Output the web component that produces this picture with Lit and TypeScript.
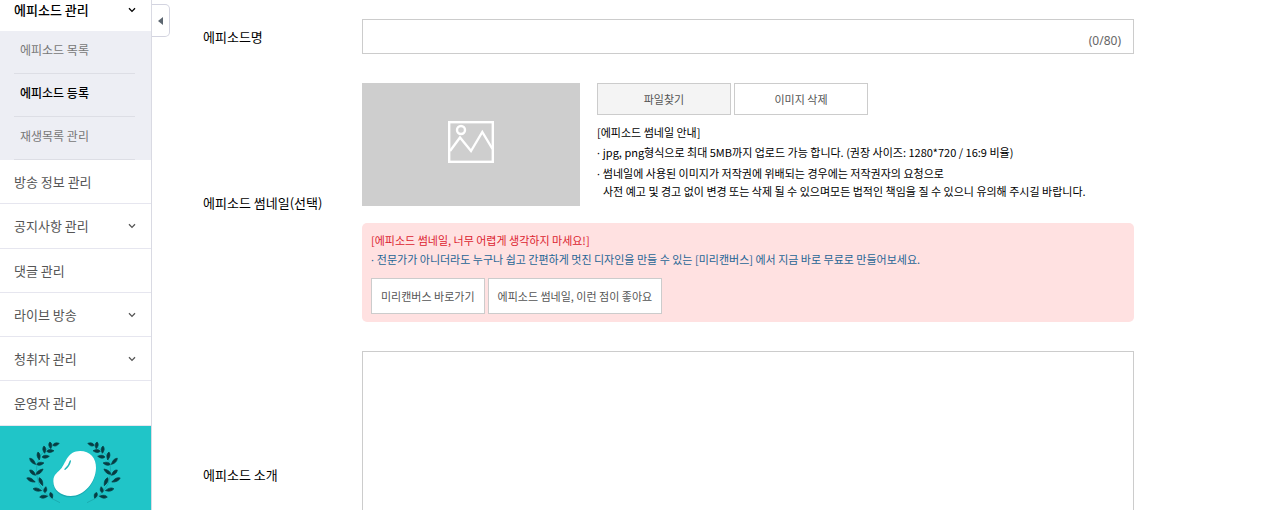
import { LitElement, html, css, svg, nothing } from "lit";
import { customElement, state } from "lit/decorators.js";
import { classMap } from "lit/directives/class-map.js";

interface MenuItem {
  label: string;
  group?: boolean;
}

const SUB_MENU = ["에피소드 목록", "에피소드 등록", "재생목록 관리"];

const MENU: MenuItem[] = [
  { label: "방송 정보 관리" },
  { label: "공지사항 관리", group: true },
  { label: "댓글 관리" },
  { label: "라이브 방송", group: true },
  { label: "청취자 관리", group: true },
  { label: "운영자 관리" },
];

// Leaves of the left laurel branch: centre x, centre y, rotation, half length.
const LEAVES = [
  [168, 73, -18, 10],
  [151, 76, 82, 10],
  [133, 89, 84, 11],
  [151, 93, -4, 11],
  [116, 108, 80, 12],
  [137, 110, -6, 11],
  [98, 124, 46, 13],
  [121, 131, -12, 11],
  [98, 158, 42, 12],
  [119, 155, -38, 13],
  [93, 180, 26, 14],
  [123, 185, 66, 13],
  [112, 209, 12, 13],
  [136, 209, -80, 9],
  [131, 230, -6, 12],
  [154, 226, 70, 9],
];

const chevron = html`<svg class="chevron" viewBox="0 0 8 6" aria-hidden="true">
  <path d="M1 1.2 4 4.4 7 1.2" fill="none" stroke="currentColor" stroke-width="1.3" />
</svg>`;

@customElement("side-menu")
export class SideMenu extends LitElement {
  static styles = css`
    :host {
      display: block;
      background: #fff;
      border-right: 1px solid #d9dae3;
      overflow: hidden;
    }
    ul {
      margin: 0;
      padding: 0;
      list-style: none;
    }
    a {
      color: inherit;
      text-decoration: none;
    }
    .item {
      display: flex;
      align-items: center;
      justify-content: space-between;
      box-sizing: border-box;
      height: 44px;
      padding: 0 15px 0 14px;
      border-bottom: 1px solid #e6e6ef;
      color: #555;
      font-size: 13px;
      line-height: 20px;
    }
    li:nth-child(4n + 2) .item {
      height: 45px;
    }
    .item.open {
      height: auto;
      padding-bottom: 11px;
      border-bottom: 0;
      color: #000;
      font-weight: 500;
    }
    .chevron {
      width: 8px;
      height: 6px;
    }
    .sub {
      padding: 0 16px 0 14px;
      background: #edeef4;
      color: #777;
      font-size: 12px;
      line-height: 20px;
    }
    .sub a {
      display: block;
      padding: 9px 6px 13px;
      border-bottom: 1px solid #dddee5;
    }
    .sub .current {
      color: #000;
      font-weight: 500;
    }
    .banner {
      display: block;
      background: #20c5c8;
    }
    .banner svg {
      display: block;
      width: 100%;
    }
  `;

  private branch() {
    return svg`
      <path d="M168 73Q104 96 109 160Q116 224 180 248" fill="none" stroke="#158f95" stroke-width="3" opacity=".45" />
      ${LEAVES.map(
        ([x, y, r, l]) => svg`<path fill="#073c42"
          d="M${-l} 0Q${-l / 3} -9 ${l} 0Q${-l / 5} 9 ${-l} 0Z"
          stroke="#073c42" stroke-width="2" stroke-linejoin="round"
          transform="translate(${x} ${y}) rotate(${r})" />`,
      )}`;
  }

  render() {
    return html`
      <nav aria-label="관리 메뉴">
        <a class="item open" href="#">에피소드 관리 ${chevron}</a>
        <ul class="sub">
          ${SUB_MENU.map(
            (label, i) =>
              html`<li><a href="#" class=${classMap({ current: i === 1 })}>${label}</a></li>`,
          )}
        </ul>
        <ul>
          ${MENU.map(
            (m) => html`<li>
              <a href="#" class="item">${m.label} ${m.group ? chevron : nothing}</a>
            </li>`,
          )}
        </ul>
      </nav>
      <a class="banner" href="#" aria-label="배너">
        <svg viewBox="0 18 453 270" aria-hidden="true">
          <g>${this.branch()}</g>
          <g transform="translate(441 0) scale(-1 1)">${this.branch()}</g>
          <path
            d="M240 97C270 97 289 118 288 148C287 192 252 232 212 232C182 232 160 214 160 188C160 166 174 162 185 148C198 130 204 97 240 97Z"
            fill="#149aa3"
            opacity=".6"
          />
          <path
            d="M240 93C270 93 289 114 288 144C287 188 252 228 212 228C182 228 160 210 160 184C160 162 174 158 185 144C198 126 204 93 240 93Z"
            fill="#fff"
          />
          <path
            d="M211 123Q208 137 195 148"
            fill="none"
            stroke="#20b5b8"
            stroke-width="4"
            stroke-linecap="round"
          />
        </svg>
      </a>
    `;
  }
}

@customElement("episode-form")
export class EpisodeForm extends LitElement {
  static styles = css`
    :host {
      display: block;
    }
    form {
      display: grid;
      grid-template-columns: 159px minmax(0, 1fr);
      align-items: center;
      row-gap: 29px;
      color: #000;
    }
    .label {
      font-size: 13px;
      line-height: 20px;
    }
    .field {
      display: flex;
      align-items: flex-end;
      border: 1px solid #ccc;
      background: #fff;
    }
    .field input {
      flex: 1;
      min-width: 0;
      height: 33px;
      box-sizing: border-box;
      padding: 0 10px;
      border: 0;
      outline: 0;
      background: none;
      font: inherit;
      font-size: 13px;
    }
    .count {
      padding: 0 12px 2px;
      color: #666;
      font: 12px/20px "Noto Sans", "Open Sans", sans-serif;
    }
    .thumb {
      display: flex;
      gap: 17px;
      margin-bottom: 17px;
    }
    .preview {
      display: flex;
      flex: none;
      align-items: center;
      justify-content: center;
      box-sizing: border-box;
      width: 218px;
      height: 123px;
      padding-bottom: 5px;
      background: #cecece;
    }
    .preview svg {
      width: 46px;
      height: 42px;
    }
    .buttons {
      display: flex;
      gap: 3px;
    }
    button {
      box-sizing: border-box;
      height: 36px;
      padding: 0 9px;
      border: 1px solid #ccc;
      background: #fff;
      color: #555;
      font: inherit;
      font-size: 11px;
      line-height: 20px;
      white-space: nowrap;
    }
    .file button {
      width: 134px;
      height: 32px;
    }
    .file .find {
      background: #f4f4f4;
    }
    .notes {
      padding-top: 7px;
      font-size: 11px;
      line-height: 20px;
    }
    p {
      margin: 0;
    }
    .dot {
      font-family: "Noto Sans", sans-serif;
      line-height: 1;
    }
    .notes .pair {
      padding-top: 2px;
      line-height: 18px;
    }
    .indent {
      display: block;
      padding-left: 6px;
    }
    .tip {
      padding: 8px 9px;
      border-radius: 5px;
      background: #ffe1e1;
      font-size: 11px;
      line-height: 19px;
    }
    .tip .buttons {
      margin-top: 9px;
    }
    .red {
      color: #dc2430;
    }
    .blue {
      color: #1f6595;
    }
    textarea {
      display: block;
      box-sizing: border-box;
      width: 100%;
      height: 248px;
      padding: 10px;
      border: 1px solid #ccc;
      outline: 0;
      resize: none;
      font: inherit;
      font-size: 13px;
    }
  `;

  @state() private title = "";

  render() {
    const dot = html`<span class="dot">· </span>`;
    return html`
      <form @submit=${(e: Event) => e.preventDefault()}>
        <label class="label" for="title">에피소드명</label>
        <div class="field">
          <input
            id="title"
            type="text"
            maxlength="80"
            .value=${this.title}
            @input=${(e: Event) => (this.title = (e.target as HTMLInputElement).value)}
          />
          <span class="count">(${this.title.length}/80)</span>
        </div>

        <span class="label" id="thumb-label">에피소드 썸네일(선택)</span>
        <div role="group" aria-labelledby="thumb-label">
          <div class="thumb">
            <div class="preview">
              <svg viewBox="0 0 46 42" fill="none" stroke="#fff" stroke-width="2.4" aria-hidden="true">
                <rect x="1.200" y="1.200" width="43.600" height="39.600" />
                <circle cx="13" cy="9" r="4" />
                <path d="M2 30 12 16.500 23 30 34.300 11 44.500 28" />
              </svg>
            </div>
            <div class="file">
              <div class="buttons">
                <button type="button" class="find">파일찾기</button>
                <button type="button">이미지 삭제</button>
              </div>
              <div class="notes">
                <p>[에피소드 썸네일 안내]</p>
                <p>${dot}jpg, png형식으로 최대 5MB까지 업로드 가능 합니다. (권장 사이즈: 1280*720 / 16:9 비율)</p>
                <p class="pair">
                  ${dot}썸네일에 사용된 이미지가 저작권에 위배되는 경우에는 저작권자의 요청으로
                  <span class="indent"
                    >사전 예고 및 경고 없이 변경 또는 삭제 될 수 있으며모든 법적인 책임을 질 수 있으니 유의해 주시길 바랍니다.</span
                  >
                </p>
              </div>
            </div>
          </div>
          <div class="tip">
            <p class="red">[에피소드 썸네일, 너무 어렵게 생각하지 마세요!]</p>
            <p class="blue">${dot}전문가가 아니더라도 누구나 쉽고 간편하게 멋진 디자인을 만들 수 있는 [미리캔버스] 에서 지금 바로 무료로 만들어보세요.</p>
            <div class="buttons">
              <button type="button">미리캔버스 바로가기</button>
              <button type="button">에피소드 썸네일, 이런 점이 좋아요</button>
            </div>
          </div>
        </div>

        <label class="label" for="intro">에피소드 소개</label>
        <textarea id="intro"></textarea>
      </form>
    `;
  }
}

@customElement("app-root")
export class AppRoot extends LitElement {
  static styles = css`
    :host {
      display: flex;
      align-items: stretch;
      height: 100vh;
      overflow: hidden;
      background: #fff;
      font-family: "Noto Sans CJK KR", "Noto Sans", sans-serif;
    }
    side-menu {
      flex: none;
      width: 151px;
    }
    .fold {
      display: flex;
      flex: none;
      align-items: center;
      justify-content: center;
      box-sizing: border-box;
      width: 18px;
      height: 33px;
      margin: 4px 0 0;
      padding: 0 1px 0 0;
      border: 1px solid #d3d4e0;
      border-left: 0;
      border-radius: 0 5px 5px 0;
      background: #fff;
    }
    .fold svg {
      width: 5px;
      height: 8px;
    }
    main {
      flex: 1;
      min-width: 0;
      padding: 19px 146px 0 33px;
    }
  `;

  render() {
    return html`
      <side-menu></side-menu>
      <button class="fold" type="button" aria-label="메뉴 접기">
        <svg viewBox="0 0 5 8" aria-hidden="true"><path d="M5 0V8L0 4Z" fill="#5c6670" /></svg>
      </button>
      <main><episode-form></episode-form></main>
    `;
  }
}
